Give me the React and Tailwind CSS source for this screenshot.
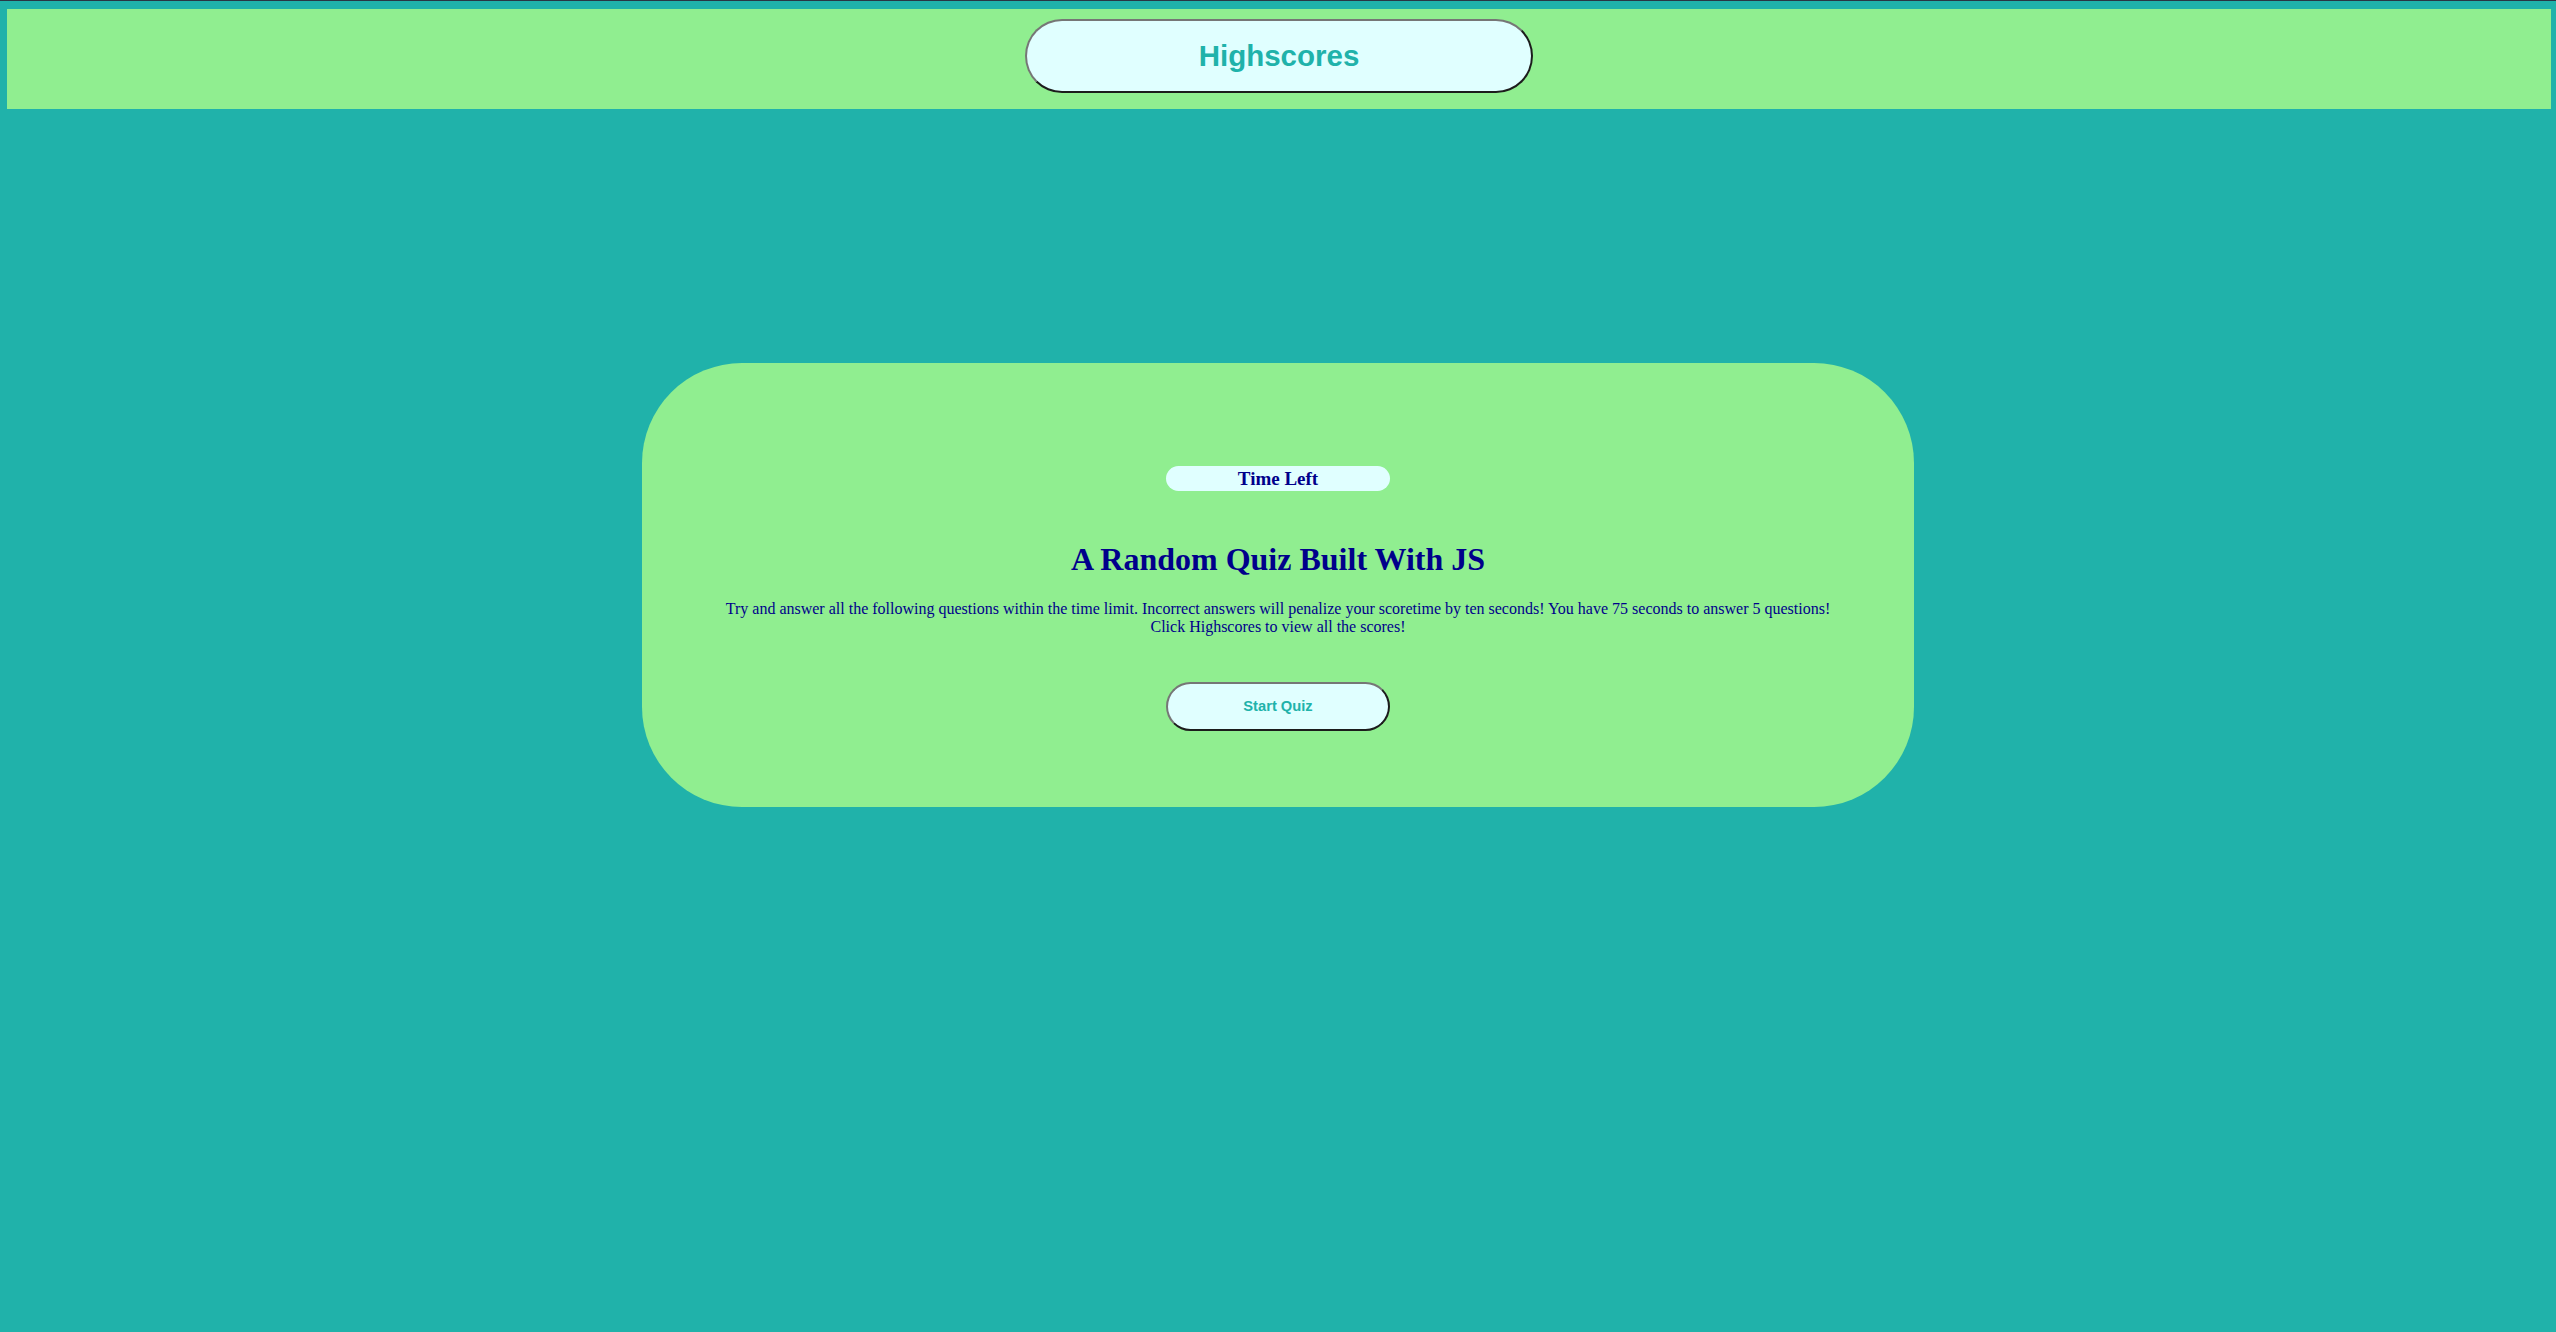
export default function App() {
  return (
    <div className="min-h-[1332px] w-full bg-[#20b2aa] border-t border-t-[#2a3644]">
      {/* Header */}
      <header className="mt-[8px] ml-[7px] mr-[5px] h-[100px] bg-[#90ee90] flex justify-center pt-[10px]">
        <button className="w-[508px] h-[74px] rounded-full bg-[#e0ffff] border-2 border-solid border-t-[#767676] border-l-[#767676] border-r-[#1c1c1c] border-b-[#1c1c1c] text-[#20b2aa] font-bold text-[29.5px] font-['Liberation_Sans',Arial,sans-serif]">
          Highscores
        </button>
      </header>

      {/* Quiz card */}
      <main className="flex justify-center mt-[254px]">
        <section className="w-[1272px] h-[444px] rounded-[100px] bg-[#90ee90] flex flex-col items-center pt-[103px] text-[#00008b] font-['Liberation_Serif','Times_New_Roman',serif]">
          <div className="w-[224px] h-[25px] rounded-full bg-[#e0ffff] flex items-center justify-center">
            <span className="font-bold text-[19px] leading-[25px]">Time Left</span>
          </div>

          <h1 className="mt-[50px] font-bold text-[32px] leading-[37px]">A Random Quiz Built With JS</h1>

          <p className="mt-[22px] text-[16px] leading-[18px] text-center">
            Try and answer all the following questions within the time limit. Incorrect answers will penalize your scoretime by ten seconds! You have 75 seconds to answer 5 questions!
            <br />
            Click Highscores to view all the scores!
          </p>

          <button className="mt-[46px] w-[224px] h-[49px] rounded-full bg-[#e0ffff] border-2 border-solid border-t-[#767676] border-l-[#767676] border-r-[#1c1c1c] border-b-[#1c1c1c] text-[#20b2aa] font-bold text-[14.7px] font-['Liberation_Sans',Arial,sans-serif]">
            Start Quiz
          </button>
        </section>
      </main>
    </div>
  );
}
